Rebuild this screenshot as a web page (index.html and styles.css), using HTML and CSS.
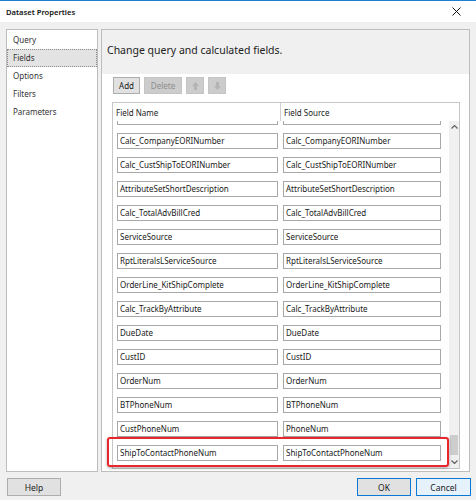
FILE: index.html
```html
<!DOCTYPE html>
<html>
<head>
<meta charset="utf-8">
<link rel="stylesheet" href="styles.css">
</head>
<body>
<div class="window">
  <div class="titlebar">
    <span class="title">Dataset Properties</span>
    <svg class="close" width="9" height="9" viewBox="0 0 9 9"><path d="M0.5 0.5 L8.5 8.5 M8.5 0.5 L0.5 8.5" stroke="#111" stroke-width="1"/></svg>
  </div>
  <div class="content">
    <ul class="nav">
      <li>Query</li>
      <li class="selected">Fields</li>
      <li>Options</li>
      <li>Filters</li>
      <li>Parameters</li>
    </ul>
    <div class="panel">
      <div class="panel-header">Change query and calculated fields.</div>
      <div class="toolbar">
        <button class="btn add">Add</button>
        <button class="btn disabled del">Delete</button>
        <button class="btn disabled icon"><svg width="7" height="8" viewBox="0 0 7 8"><path d="M3.5 0 L7 4 H5 V8 H2 V4 H0 Z" fill="#b4b4b4"/></svg></button>
        <button class="btn disabled icon"><svg width="7" height="8" viewBox="0 0 7 8"><path d="M3.5 8 L7 4 H5 V0 H2 V4 H0 Z" fill="#b4b4b4"/></svg></button>
      </div>
      <div class="grid">
        <div class="grid-head">
          <div class="hcell first">Field Name</div>
          <div class="hcell">Field Source</div>
        </div>
        <div class="grid-body">
          <div class="viewport">
            <div class="row partial"><div class="box a"></div><div class="box b"></div></div>
            <div class="row"><div class="box a">Calc_CompanyEORINumber</div><div class="box b">Calc_CompanyEORINumber</div></div>
            <div class="row"><div class="box a">Calc_CustShipToEORINumber</div><div class="box b">Calc_CustShipToEORINumber</div></div>
            <div class="row"><div class="box a">AttributeSetShortDescription</div><div class="box b">AttributeSetShortDescription</div></div>
            <div class="row"><div class="box a">Calc_TotalAdvBillCred</div><div class="box b">Calc_TotalAdvBillCred</div></div>
            <div class="row"><div class="box a">ServiceSource</div><div class="box b">ServiceSource</div></div>
            <div class="row"><div class="box a">RptLiteralsLServiceSource</div><div class="box b">RptLiteralsLServiceSource</div></div>
            <div class="row"><div class="box a">OrderLine_KitShipComplete</div><div class="box b">OrderLine_KitShipComplete</div></div>
            <div class="row"><div class="box a">Calc_TrackByAttribute</div><div class="box b">Calc_TrackByAttribute</div></div>
            <div class="row"><div class="box a">DueDate</div><div class="box b">DueDate</div></div>
            <div class="row"><div class="box a">CustID</div><div class="box b">CustID</div></div>
            <div class="row"><div class="box a">OrderNum</div><div class="box b">OrderNum</div></div>
            <div class="row"><div class="box a">BTPhoneNum</div><div class="box b">BTPhoneNum</div></div>
            <div class="row"><div class="box a">CustPhoneNum</div><div class="box b">PhoneNum</div></div>
            <div class="row"><div class="box a">ShipToContactPhoneNum</div><div class="box b">ShipToContactPhoneNum</div></div>
          </div>
          <div class="scrollbar">
            <div class="sb-arrow"><svg width="7" height="4" viewBox="0 0 7 4"><path d="M0.5 3.5 L3.5 0.5 L6.5 3.5" fill="none" stroke="#606060" stroke-width="1.2"/></svg></div>
            <div class="sb-track"><div class="sb-thumb"></div></div>
            <div class="sb-arrow"><svg width="7" height="4" viewBox="0 0 7 4"><path d="M0.5 0.5 L3.5 3.5 L6.5 0.5" fill="none" stroke="#606060" stroke-width="1.2"/></svg></div>
          </div>
        </div>
      </div>
      <div class="highlight"></div>
    </div>
  </div>
  <div class="footer">
    <button class="btn big">Help</button>
    <div class="spacer"></div>
    <button class="btn big default">OK</button>
    <button class="btn big hover">Cancel</button>
  </div>
</div>
</body>
</html>
```
FILE: styles.css
```css
* { box-sizing: border-box; }
html, body {
  margin: 0;
  padding: 0;
  background: #f0f0f0;
  font-family: "Segoe UI", "Noto Sans", "Open Sans", sans-serif;
  color: #1a1a1a;
}
.window {
  width: 476px;
  height: 500px;
  display: flex;
  flex-direction: column;
}
.titlebar {
  height: 22px;
  flex: none;
  background: #ffffff;
  border-top: 1px solid #1c7fd6;
  display: flex;
  align-items: center;
  justify-content: space-between;
  padding: 0 15px 0 6px;
}
.title {
  font-size: 7.6px;
  font-weight: 600;
  color: #111;
}
.close { display: block; }
.content {
  height: 450px;
  flex: none;
  display: grid;
  grid-template-columns: 92px 1fr;
  column-gap: 3px;
  padding: 7px 6px 0 6px;
}
.nav {
  list-style: none;
  margin: 0;
  padding: 1px 0 0 0;
  background: #fff;
  border: 1px solid #bdbdbd;
}
.nav li {
  height: 18px;
  line-height: 17px;
  padding-left: 6px;
  font-size: 8px;
  color: #333;
}
.nav li.selected {
  background: #e3e3e3;
  border: 1px dotted #8a8a8a;
  padding-left: 5px;
  line-height: 15px;
}
.panel {
  position: relative;
  background: #fff;
  border: 1px solid #bdbdbd;
  display: flex;
  flex-direction: column;
}
.panel-header {
  height: 44px;
  flex: none;
  background: #f0f0f0;
  padding: 13px 0 0 5px;
  font-size: 10.5px;
  color: #222;
}
.toolbar {
  display: flex;
  gap: 4px;
  padding: 3px 0 0 11px;
  height: 28px;
  flex: none;
}
.btn {
  font-family: inherit;
  height: 17px;
  padding: 0 6px;
  margin: 0;
  font-size: 8px;
  color: #1a1a1a;
  background: #e1e1e1;
  border: 1px solid #adadad;
  display: flex;
  align-items: center;
  justify-content: center;
}
.btn.add { width: 27px; padding: 0; }
.btn.disabled {
  background: #cccccc;
  border-color: #c4c4c4;
  color: #8d8d8d;
}
.btn.del { width: 38px; padding: 0; }
.btn.icon {
  width: 18px;
  padding: 0;
}
.grid {
  flex: 1;
  margin: 0 9px 2px 10px;
  border: 1px solid #c6c6c6;
  display: flex;
  flex-direction: column;
  min-height: 0;
}
.grid-head {
  height: 18px;
  flex: none;
  display: flex;
  font-size: 8px;
  color: #222;
}
.hcell {
  padding: 4px 0 0 3px;
  border-left: 1px solid #d0d0d0;
  flex: 1;
}
.hcell.first {
  flex: none;
  width: 167px;
  border-left: none;
}
.grid-body {
  flex: 1;
  display: flex;
  min-height: 0;
}
.viewport {
  flex: 1;
  overflow: hidden;
  padding-left: 4px;
}
.row {
  height: 24px;
  display: flex;
  gap: 5px;
  padding-top: 4px;
}
.row.partial {
  height: 8px;
  padding-top: 0;
}
.box {
  height: 16px;
  border: 1px solid #a8a8a8;
  font-size: 8px;
  line-height: 14px;
  padding-left: 2px;
  color: #1a1a1a;
  white-space: nowrap;
  overflow: hidden;
}
.box.a { width: 161px; }
.box.b { width: 158px; }
.row.partial .box {
  height: 4px;
  border-top: none;
}
.scrollbar {
  width: 10px;
  flex: none;
  background: #f0f0f0;
  display: flex;
  flex-direction: column;
}
.sb-arrow {
  height: 12px;
  flex: none;
  display: flex;
  align-items: center;
  justify-content: center;
}
.sb-track {
  flex: 1;
  display: flex;
  flex-direction: column;
  justify-content: flex-end;
}
.sb-thumb {
  height: 20px;
  margin: 0 1px 1px 1px;
  background: #cdcdcd;
}
.highlight {
  position: absolute;
  left: 5px;
  top: 407px;
  width: 342px;
  height: 30px;
  border: 2px solid #e8262b;
  border-radius: 3px;
  box-shadow: 0 1px 3px rgba(0, 0, 0, 0.35);
}
.footer {
  flex: 1;
  display: flex;
  align-items: flex-start;
  padding: 6px 5px 0 7px;
  gap: 5px;
}
.spacer { flex: 1; }
.btn.big {
  width: 54px;
  height: 18px;
  font-size: 8.5px;
}
.btn.default {
  border-color: #0a78d7;
}
.btn.hover {
  width: 55px;
  background: #e5f1fb;
  border-color: #0a78d7;
}
```
